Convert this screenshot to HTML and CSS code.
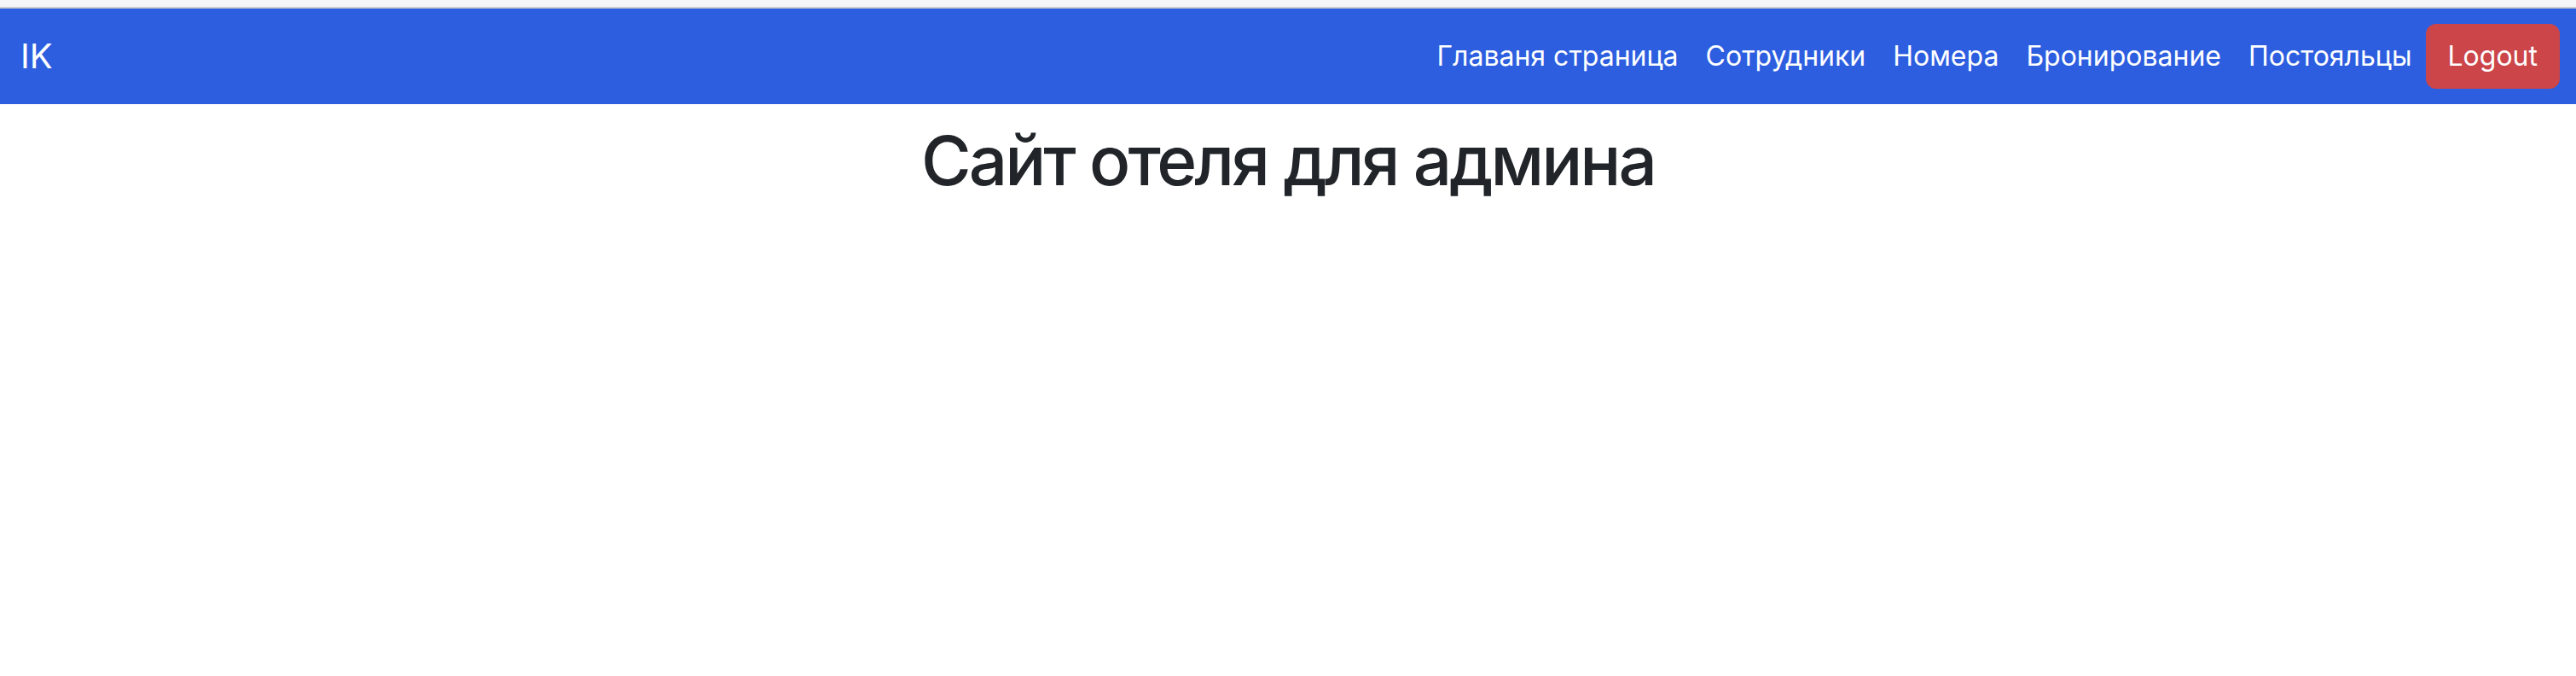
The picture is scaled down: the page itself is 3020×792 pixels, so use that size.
FILE: index.html
```html
<!DOCTYPE html>
<html lang="ru">
<head>
<meta charset="utf-8">
<title>Сайт отеля для админа</title>
<link rel="stylesheet" href="styles.css">
</head>
<body>
<div class="topstrip"></div>
<nav class="navbar">
  <a class="brand" href="#">IK</a>
  <ul class="nav">
    <li><a class="nav-link" href="#">Главаня страница</a></li>
    <li><a class="nav-link" href="#">Сотрудники</a></li>
    <li><a class="nav-link" href="#">Номера</a></li>
    <li><a class="nav-link" href="#">Бронирование</a></li>
    <li><a class="nav-link" href="#">Постояльцы</a></li>
    <li><button class="btn-logout" type="button">Logout</button></li>
  </ul>
</nav>
<main class="content">
  <h1 class="title">Сайт отеля для админа</h1>
</main>
</body>
</html>
```

FILE: styles.css
```css
html, body {
  margin: 0;
  padding: 0;
  background: #ffffff;
}
body {
  font-family: Inter, "Noto Sans", "Liberation Sans", sans-serif;
  color: #212529;
}
.topstrip {
  height: 8px;
  background: #f6f6f8;
  border-bottom: 2px solid #cdcdcf;
}
.navbar {
  height: 112px;
  box-sizing: border-box;
  background: #2d5ee0;
  display: flex;
  align-items: center;
  justify-content: space-between;
  padding: 0 19px 0 24px;
}
.brand {
  color: #ffffff;
  text-decoration: none;
  font-size: 40px;
  line-height: 60px;
}
.nav {
  list-style: none;
  margin: 0;
  padding: 0;
  display: flex;
  align-items: center;
}
.nav-link {
  display: block;
  color: #ffffff;
  text-decoration: none;
  font-size: 32px;
  line-height: 48px;
  padding: 16px;
}
.btn-logout {
  font-family: inherit;
  font-size: 32px;
  line-height: 48px;
  color: #ffffff;
  background: #cb4549;
  border: 2px solid #cb4549;
  border-radius: 12px;
  padding: 12px 24px;
  cursor: pointer;
}
.content {
  text-align: center;
}
.title {
  margin: 18px 0 16px;
  font-size: 80px;
  font-weight: 500;
  line-height: 96px;
  letter-spacing: -3px;
}
```
